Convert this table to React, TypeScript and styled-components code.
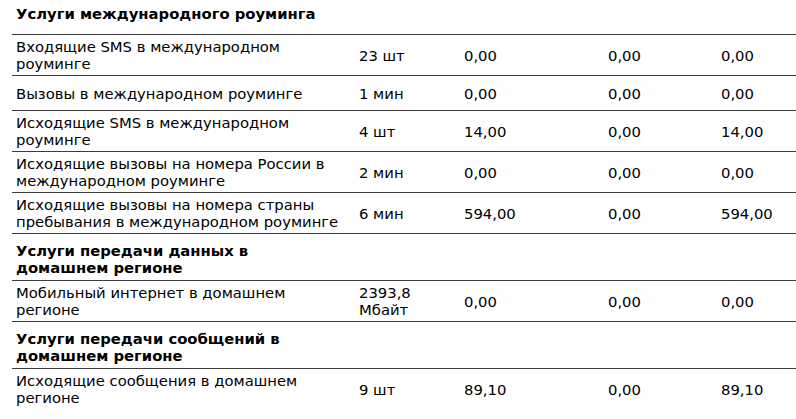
import * as React from 'react';
import styled, { createGlobalStyle } from 'styled-components';

const GlobalStyle = createGlobalStyle`
  html, body {
    margin: 0;
    padding: 0;
    background: #ffffff;
    overflow: hidden;
  }
`;

const Page = styled.div`
  padding: 0 0 0 12px;
  font-family: "DejaVu Sans", Verdana, sans-serif;
  font-size: 14.8px;
  color: #000;
`;

const Table = styled.table`
  width: 100%;
  border-collapse: collapse;
  table-layout: fixed;

  tr:last-child td {
    border-bottom: none;
  }
`;

const Cell = styled.td<{ $name?: boolean }>`
  padding: ${({ $name }) => ($name ? '3px 10px 3px 4px' : '3px 4px')};
  height: 35px;
  line-height: 17px;
  vertical-align: middle;
  border-bottom: 1px solid #3c3c3c;
  box-sizing: border-box;
`;

const HeadCell = styled.td<{ $first?: boolean }>`
  padding: ${({ $first }) => ($first ? '5px 4px 12px 4px' : '8px 40px 4px 4px')};
  line-height: 17px;
  font-weight: bold;
  vertical-align: top;
  border-bottom: 1px solid #3c3c3c;
`;

type Row =
  | { kind: 'head'; title: string }
  | { kind: 'item'; name: string; qty: React.ReactNode; a: string; b: string; c: string };

const rows: Row[] = [
  { kind: 'head', title: 'Услуги международного роуминга' },
  { kind: 'item', name: 'Входящие SMS в международном роуминге', qty: '23 шт', a: '0,00', b: '0,00', c: '0,00' },
  { kind: 'item', name: 'Вызовы в международном роуминге', qty: '1 мин', a: '0,00', b: '0,00', c: '0,00' },
  { kind: 'item', name: 'Исходящие SMS в международном роуминге', qty: '4 шт', a: '14,00', b: '0,00', c: '14,00' },
  { kind: 'item', name: 'Исходящие вызовы на номера России в международном роуминге', qty: '2 мин', a: '0,00', b: '0,00', c: '0,00' },
  { kind: 'item', name: 'Исходящие вызовы на номера страны пребывания в международном роуминге', qty: '6 мин', a: '594,00', b: '0,00', c: '594,00' },
  { kind: 'head', title: 'Услуги передачи данных в домашнем регионе' },
  { kind: 'item', name: 'Мобильный интернет в домашнем регионе', qty: <>2393,8<br />Мбайт</>, a: '0,00', b: '0,00', c: '0,00' },
  { kind: 'head', title: 'Услуги передачи сообщений в домашнем регионе' },
  { kind: 'item', name: 'Исходящие сообщения в домашнем регионе', qty: '9 шт', a: '89,10', b: '0,00', c: '89,10' },
];

export default function App() {
  return (
    <Page>
      <GlobalStyle />
      <Table>
        <colgroup>
          <col style={{ width: 343 }} />
          <col style={{ width: 105 }} />
          <col style={{ width: 144 }} />
          <col style={{ width: 113 }} />
          <col />
        </colgroup>
        <tbody>
          {rows.map((r, i) =>
            r.kind === 'head' ? (
              <tr key={i}>
                <HeadCell $first={i === 0}>{r.title}</HeadCell>
                <HeadCell />
                <HeadCell />
                <HeadCell />
                <HeadCell />
              </tr>
            ) : (
              <tr key={i}>
                <Cell $name>{r.name}</Cell>
                <Cell>{r.qty}</Cell>
                <Cell>{r.a}</Cell>
                <Cell>{r.b}</Cell>
                <Cell>{r.c}</Cell>
              </tr>
            ),
          )}
        </tbody>
      </Table>
    </Page>
  );
}
